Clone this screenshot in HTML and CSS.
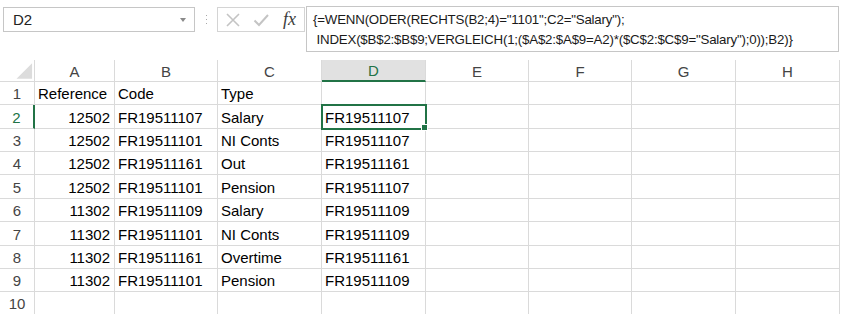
FILE: index.html
```html
<!DOCTYPE html>
<html lang="de">
  <head>
    <meta charset="UTF-8" />
    <meta name="viewport" content="width=device-width, initial-scale=1.0" />
    <title>Tabelle</title>
    <link rel="stylesheet" href="styles.css">
  </head>
  <body>
    <div class="toolbar">
      <div class="namebox">
        <span>D2</span>
        <span class="caret"></span>
      </div>
      <div class="grip">
        <svg width="3" height="12" viewBox="0 0 3 12">
          <rect x="1" y="1" width="1" height="1" fill="#a8a8a8" />
          <rect x="1" y="5" width="1" height="1" fill="#a8a8a8" />
          <rect x="1" y="9" width="1" height="1" fill="#a8a8a8" />
        </svg>
      </div>
      <div class="buttons">
        <svg class="icon" width="16" height="16" viewBox="0 0 16 16">
          <path d="M2 2 L14 14 M14 2 L2 14" stroke="#c4c4c4" stroke-width="1.6" fill="none" />
        </svg>
        <svg class="icon" width="16" height="16" viewBox="0 0 16 16">
          <path d="M1.5 8.5 L6 13 L15 3" stroke="#c4c4c4" stroke-width="2" fill="none" />
        </svg>
        <span class="fx">fx</span>
      </div>
      <div class="formula">{=WENN(ODER(RECHTS(B2;4)="1101";C2="Salary");<br>&nbsp;INDEX($B$2:$B$9;VERGLEICH(1;($A$2:$A$9=A2)*($C$2:$C$9="Salary");0));B2)}</div>
    </div>

    <div class="sheet" id="sheet">
      <div class="cell corner">
        <svg width="35" height="22" viewBox="0 0 35 22">
          <polygon points="17,19 33,19 33,3" fill="#dcdcdc" />
        </svg>
      </div>
    </div>

    <script>
      const columns = ["A", "B", "C", "D", "E", "F", "G", "H"];
      const rows = [
        ["Reference", "Code", "Type", ""],
        ["12502", "FR19511107", "Salary", "FR19511107"],
        ["12502", "FR19511101", "NI Conts", "FR19511107"],
        ["12502", "FR19511161", "Out", "FR19511161"],
        ["12502", "FR19511101", "Pension", "FR19511107"],
        ["11302", "FR19511109", "Salary", "FR19511109"],
        ["11302", "FR19511101", "NI Conts", "FR19511109"],
        ["11302", "FR19511161", "Overtime", "FR19511161"],
        ["11302", "FR19511101", "Pension", "FR19511109"],
        ["", "", "", ""],
      ];

      const sheet = document.getElementById("sheet");
      let html = "";

      columns.forEach((col) => {
        const active = col === "D" ? " active-col" : "";
        html += `<div class="cell col-head${active}">${col}</div>`;
      });

      rows.forEach((row, i) => {
        const active = i === 1 ? " active-row" : "";
        html += `<div class="cell row-head${active}">${i + 1}</div>`;
        columns.forEach((col, j) => {
          const value = row[j] || "";
          let cls = "cell";
          if (/^\d+$/.test(value)) cls += " num";
          if (i === 1 && col === "D") cls += " selected";
          html += `<div class="${cls}">${value}</div>`;
        });
      });

      sheet.insertAdjacentHTML("beforeend", html);
    </script>
  </body>
</html>
```

FILE: styles.css
```css
body {
  margin: 0;
  font-family: "Liberation Sans", Arial, sans-serif;
  background: #fff;
  color: #000;
  overflow: hidden;
}

.toolbar {
  height: 60px;
  display: flex;
  align-items: flex-start;
  padding: 7px 0 0 3px;
  box-sizing: border-box;
}

.namebox {
  width: 192px;
  height: 25px;
  box-sizing: border-box;
  border: 1px solid #c6c6c6;
  display: flex;
  align-items: center;
  padding-left: 9px;
  font-size: 15px;
  color: #222;
}

.caret {
  margin-left: auto;
  margin-right: 8px;
  width: 0;
  height: 0;
  border-left: 3px solid transparent;
  border-right: 3px solid transparent;
  border-top: 4px solid #8a8a8a;
}

.grip {
  width: 22px;
  height: 25px;
  display: flex;
  align-items: center;
  justify-content: center;
}

.buttons {
  width: 88px;
  height: 25px;
  box-sizing: border-box;
  border: 1px solid #d4d4d4;
  display: flex;
  align-items: center;
  padding-left: 7px;
  gap: 12px;
}

.fx {
  font-family: "Liberation Serif", "Times New Roman", serif;
  font-style: italic;
  font-size: 18px;
  color: #3c3c3c;
  margin-left: 2px;
}

.formula {
  margin: -1px 0 0 1px;
  width: 533px;
  height: 46px;
  box-sizing: border-box;
  border: 1px solid #c6c6c6;
  padding: 3px 6px;
  font-size: 13.3px;
  letter-spacing: -0.2px;
  line-height: 20px;
  color: #1a1a1a;
  white-space: nowrap;
}

.sheet {
  display: grid;
  grid-template-columns: 35px 80px 103px 104px 104px 103px 103px 104px 104px;
  grid-template-rows: 22px 23px 24px 23px 23px 24px 23px 24px 23px 23px 23px;
  font-size: 15px;
}

.cell {
  box-sizing: border-box;
  border-right: 1px solid #dadada;
  border-bottom: 1px solid #dadada;
  padding: 1px 3px 0;
  display: flex;
  align-items: center;
  white-space: nowrap;
  overflow: hidden;
}

.corner {
  padding: 0;
}

.col-head,
.row-head {
  justify-content: center;
  color: #444;
}

.num {
  justify-content: flex-end;
  padding-right: 4px;
}

.active-col {
  background: #e1e1e1;
  color: #217346;
  border-bottom: 2px solid #217346;
}

.active-row {
  color: #217346;
  border-right: 2px solid #217346;
}

.selected {
  position: relative;
  overflow: visible;
  outline: 2px solid #217346;
  outline-offset: -1px;
  z-index: 1;
}

.selected::after {
  content: "";
  position: absolute;
  right: -3px;
  bottom: -3px;
  width: 5px;
  height: 5px;
  background: #217346;
  border: 1px solid #fff;
}
```
